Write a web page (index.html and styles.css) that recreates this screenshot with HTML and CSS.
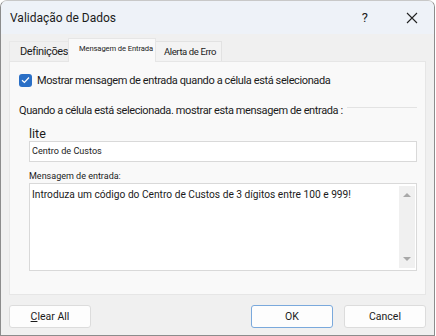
FILE: index.html
```html
<!DOCTYPE html>
<html lang="pt">
<head>
  <meta charset="UTF-8" />
  <title>Validação de Dados</title>
  <link rel="stylesheet" href="styles.css">
</head>
<body>
  <div class="window">
    <div class="titlebar">
      <span class="title">Validação de Dados</span>
      <span class="help">?</span>
      <svg class="close" width="12" height="12" viewBox="0 0 12 12">
        <path d="M1 1L11 11M11 1L1 11" stroke="#222" stroke-width="1.1" fill="none"/>
      </svg>
    </div>

    <div class="tabs">
      <div class="tab first">Definições</div>
      <div class="tab active">Mensagem de Entrada</div>
      <div class="tab last">Alerta de Erro</div>
    </div>

    <div class="panel">
      <label class="check">
        <span class="box">
          <svg width="9" height="8" viewBox="0 0 9 8"><path d="M1 4.2L3.4 6.5L8 1.5" stroke="#fff" stroke-width="1.2" fill="none"/></svg>
        </span>
        Mostrar mensagem de entrada quando a célula está selecionada
      </label>

      <div class="group">
        <span>Quando a célula está selecionada. mostrar esta mensagem de entrada :</span>
        <span class="rule"></span>
      </div>

      <div class="field">
        <div class="lbl big">lite</div>
        <div class="input">Centro de Custos</div>
      </div>

      <div class="field">
        <div class="lbl">Mensagem de entrada:</div>
        <div class="textarea">
          <div class="msg">Introduza um código do Centro de Custos de 3 dígitos entre 100 e 999!</div>
          <div class="scroll">
            <span class="up"></span>
            <span class="down"></span>
          </div>
        </div>
      </div>
    </div>

    <div class="footer">
      <button class="btn"><u>C</u>lear All</button>
      <span class="spacer"></span>
      <button class="btn ok">OK</button>
      <button class="btn">Cancel</button>
    </div>
  </div>
</body>
</html>
```

FILE: styles.css
```css
body {
  margin: 0;
  background: #fff;
  font-family: Roboto, "Noto Sans", sans-serif;
  color: #1b1b1b;
}

.window {
  width: 433px;
  height: 334px;
  background: #f0f0f0;
  border: 1px solid #8c8c8c;
  border-top-color: #c8c8c8;
  border-radius: 7px 7px 0 0;
  overflow: hidden;
  display: flex;
  flex-direction: column;
}

.titlebar {
  height: 33px;
  background: #eef2f8;
  display: flex;
  align-items: center;
  padding: 0 0 0 9px;
  flex: none;
}

.title {
  font-size: 12px;
  flex: 1;
}

.help {
  font-size: 13px;
  margin-right: 38px;
}

.close {
  margin-right: 16px;
}

.tabs {
  display: flex;
  align-items: flex-end;
  height: 27px;
  padding-left: 8px;
  flex: none;
}

.tab {
  height: 20px;
  display: flex;
  align-items: center;
  box-sizing: border-box;
  font-size: 11px;
  letter-spacing: -0.38px;
  white-space: nowrap;
  background: #f0f0f0;
  border: 1px solid #e2e2e2;
  border-bottom: none;
  position: relative;
}

.tab.first {
  width: 59px;
  padding-left: 10px;
  border-color: #e8e8e8;
  border-right: none;
}

.tab.active {
  height: 24px;
  width: 88px;
  padding-left: 10px;
  font-size: 7.6px;
  letter-spacing: -0.1px;
  background: #f9f9f9;
  border-color: #e6e6e6;
  align-items: flex-start;
  padding-top: 5px;
  margin-bottom: -1px;
  z-index: 1;
}

.tab.last {
  width: 66px;
  padding-left: 8px;
  font-size: 9.5px;
  letter-spacing: -0.4px;
  background: #f3f3f3;
  border-left: none;
}

.panel {
  margin: 0 8px;
  height: 234px;
  background: #f9f9f9;
  border: 1px solid #e6e6e6;
  box-sizing: border-box;
  padding: 10px 8px 0 9px;
  flex: none;
}

.check {
  display: flex;
  align-items: center;
  font-size: 11px;
  letter-spacing: -0.38px;
  gap: 5px;
  height: 16px;
}

.box {
  width: 13px;
  height: 13px;
  background: #2a6fc6;
  border-radius: 3px;
  display: flex;
  align-items: center;
  justify-content: center;
}

.group {
  margin-top: 16px;
  display: flex;
  align-items: center;
  gap: 4px;
  font-size: 11px;
  letter-spacing: -0.38px;
  line-height: 14px;
  white-space: nowrap;
}

.rule {
  flex: 1;
  height: 1px;
  background: #e3e3e3;
  margin-top: -7px;
}

.field {
  margin-left: 10px;
}

.lbl {
  font-size: 9px;
  line-height: 12px;
  margin-top: 8px;
  margin-bottom: 1px;
}

.lbl.big {
  font-size: 12.5px;
  line-height: 14px;
  margin-top: 9px;
  margin-bottom: 0;
}

.input {
  height: 21px;
  box-sizing: border-box;
  background: #fff;
  border: 1px solid #d9d9d9;
  font-size: 9.1px;
  padding: 4px 0 0 2px;
}

.textarea {
  height: 88px;
  box-sizing: border-box;
  background: #fff;
  border: 1px solid #d9d9d9;
  display: flex;
}

.msg {
  flex: 1;
  font-size: 10.2px;
  padding: 5px 0 0 2px;
}

.scroll {
  width: 16px;
  margin: 2px 1px 2px 0;
  background: #f0f0f0;
  display: flex;
  flex-direction: column;
  justify-content: space-between;
  align-items: center;
  padding: 7px 0;
}

.up, .down {
  width: 0;
  height: 0;
  border-left: 4px solid transparent;
  border-right: 4px solid transparent;
}

.up { border-bottom: 4px solid #a8a8a8; }
.down { border-top: 4px solid #a8a8a8; }

.footer {
  display: flex;
  padding: 10px 8px 0 8px;
  gap: 11px;
}

.spacer {
  flex: 1;
}

.btn {
  width: 82px;
  height: 23px;
  background: #fdfdfd;
  border: 1px solid #dcdcdc;
  border-radius: 3px;
  font-family: Roboto, "Noto Sans", sans-serif;
  font-size: 10.5px;
  color: #1b1b1b;
  padding: 0;
}

.btn.ok {
  border-color: #7aa9dc;
}
```
